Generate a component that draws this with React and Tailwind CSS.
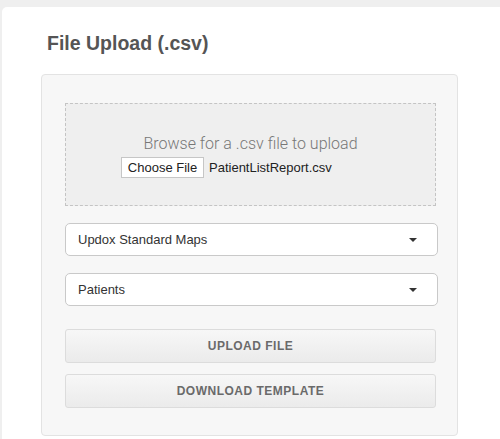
import React from "react";

function Caret() {
  return (
    <svg width="8" height="4" viewBox="0 0 8 4" className="block">
      <path d="M0 0 H8 L4 4 Z" fill="#333" />
    </svg>
  );
}

function SelectBox({ label }) {
  return (
    <div className="flex h-[33px] w-[373px] items-center justify-between rounded-[5px] border border-[#c9c9c9] bg-white pl-[12px] pr-[20px]">
      <span className="text-[13px] leading-none text-[#333]">{label}</span>
      <Caret />
    </div>
  );
}

function ActionButton({ label }) {
  return (
    <div className="flex h-[34px] w-[371px] items-center justify-center rounded-[3px] border border-[#dcdcdc] bg-gradient-to-b from-[#f7f7f7] to-[#ebebeb] text-[12px] font-bold tracking-[0.5px] text-[#6a6a6a]">
      {label}
    </div>
  );
}

export default function App() {
  return (
    <div className="min-h-[439px] w-[500px] overflow-hidden bg-[#efefef] pl-[2px] pt-[7px] font-['Liberation_Sans',Arial,sans-serif]">
      <div className="h-[450px] rounded-tl-[5px] bg-white pl-[39px] pt-[21px]">
        <h1 className="pl-[6px] text-[19.5px] font-bold leading-[30px] text-[#555]">
          File Upload (.csv)
        </h1>
        <div className="mt-[16px] w-[417px] rounded-[4px] border border-[#e3e3e3] bg-[#f7f7f7] pb-[27px] pl-[23px] pt-[28px]">
          <div className="flex h-[103px] w-[371px] flex-col items-center border border-dashed border-[#c4c4c4] bg-[#efefef] pt-[30px]">
            <div className="font-['Roboto',sans-serif] text-[16px] font-light leading-[20px] text-[#777]">
              Browse for a .csv file to upload
            </div>
            <div className="mt-[3px] ml-[55px] flex items-center self-start">
              <div className="flex h-[21px] w-[83px] items-center justify-center border border-[#c6c6c6] bg-white text-[13px] text-[#222]">
                Choose File
              </div>
              <span className="ml-[5px] text-[13px] text-[#222]">PatientListReport.csv</span>
            </div>
          </div>
          <div className="mt-[17px]">
            <SelectBox label="Updox Standard Maps" />
          </div>
          <div className="mt-[17px]">
            <SelectBox label="Patients" />
          </div>
          <div className="mt-[23px]">
            <ActionButton label="UPLOAD FILE" />
          </div>
          <div className="mt-[11px]">
            <ActionButton label="DOWNLOAD TEMPLATE" />
          </div>
        </div>
      </div>
    </div>
  );
}
